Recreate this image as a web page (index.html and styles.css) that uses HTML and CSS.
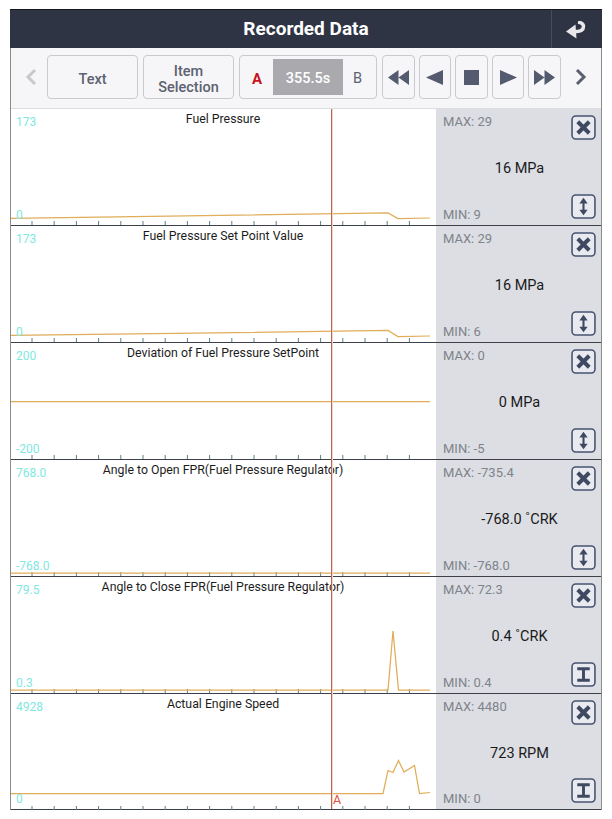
FILE: index.html
```html
<!DOCTYPE html>
<html lang="en">
<head>
<meta charset="utf-8">
<title>Recorded Data</title>
<link rel="stylesheet" href="styles.css">
</head>
<body>
<svg class="defs" width="0" height="0" aria-hidden="true">
  <symbol id="ticks" viewBox="0 0 425 116"><path class="tick" d="M21 112v4M43.200 112v4M65.400 112v4M87.600 112v4M109.800 112v4M132 112v4M154.200 112v4M176.400 112v4M198.600 112v4M220.800 112v4M243 112v4M265.200 112v4M287.400 112v4M309.600 112v4M331.800 112v4M354 112v4M376.200 112v4M398.400 112v4"/></symbol>
  <symbol id="ico-x" viewBox="0 0 24 24"><rect class="ib" x="1" y="1" width="22" height="22" rx="3.500"/><path class="ig" d="M6.500 6.500l11 11M17.500 6.500l-11 11"/></symbol>
  <symbol id="ico-ud" viewBox="0 0 24 24"><rect class="ib" x="1" y="1" width="22" height="22" rx="3.500"/><path class="ig2" d="M12 7.500v9"/><path class="if" d="M12 3.500l4 5.500H8zM12 20.500L8 15h8z"/></symbol>
  <symbol id="ico-i" viewBox="0 0 24 24"><rect class="ib" x="1" y="1" width="22" height="22" rx="3.500"/><path class="ig3" d="M6 6.500h12M6 17.500h12M12 6.500v11"/></symbol>
</svg>
<main class="frame">
  <header class="head">
    <h1 class="title">Recorded Data</h1>
    <div class="back">
      <svg class="back-ico" width="20" height="18" viewBox="0 0 20 18"><path class="back-tail" d="M8 10.800C13.500 10.800 17.500 9 17.500 5.500 17.500 3 15 1.500 12 1"/><path class="back-head" d="M0 10.500L9.500 3.500 10.500 17.500z"/></svg>
    </div>
  </header>
  <nav class="bar">
    <span class="chev"><svg width="12" height="18" viewBox="0 0 12 18"><path class="chev-off" d="M10 2L3 9l7 7"/></svg></span>
    <button class="btn wide">Text</button>
    <button class="btn wide">Item<br>Selection</button>
    <div class="btn ab">
      <span class="a">A</span>
      <span class="time">355.5s</span>
      <span class="b">B</span>
    </div>
    <div class="media">
      <button class="btn m"><svg width="21" height="15" viewBox="0 0 21 15"><path class="mi" d="M10.500 0v15L0 7.500zM21 0v15L10.500 7.500z"/></svg></button>
      <button class="btn m"><svg width="17" height="15" viewBox="0 0 17 15"><path class="mi" d="M17 0v15L0 7.500z"/></svg></button>
      <button class="btn m"><svg width="15" height="15" viewBox="0 0 15 15"><path class="mi" d="M0 0h15v15H0z"/></svg></button>
      <button class="btn m"><svg width="17" height="15" viewBox="0 0 17 15"><path class="mi" d="M0 0v15l17-7.500z"/></svg></button>
      <button class="btn m"><svg width="21" height="15" viewBox="0 0 21 15"><path class="mi" d="M0 0v15l10.500-7.500zM10.500 0v15L21 7.500z"/></svg></button>
    </div>
    <span class="chev right"><svg width="12" height="18" viewBox="0 0 12 18"><path class="chev-on" d="M2 2l7 7-7 7"/></svg></span>
  </nav>
  <section class="rows">
    <article class="row">
      <div class="chart">
        <svg class="plot" viewBox="0 0 425 116"><use href="#ticks"/><polyline class="trace" points="0,109.500 377,104 387,109.500 419,109"/></svg>
        <span class="y top">173</span><span class="y bot">0</span>
        <span class="name">Fuel Pressure</span>
      </div>
      <aside class="side">
        <span class="mm">MAX: 29</span><span class="val">16 MPa</span><span class="mm">MIN: 9</span>
        <svg class="ico x"><use href="#ico-x"/></svg><svg class="ico z"><use href="#ico-ud"/></svg>
      </aside>
    </article>
    <article class="row">
      <div class="chart">
        <svg class="plot" viewBox="0 0 425 116"><use href="#ticks"/><polyline class="trace" points="0,109.500 377,104.500 387,110.500 419,110"/></svg>
        <span class="y top">173</span><span class="y bot">0</span>
        <span class="name">Fuel Pressure Set Point Value</span>
      </div>
      <aside class="side">
        <span class="mm">MAX: 29</span><span class="val">16 MPa</span><span class="mm">MIN: 6</span>
        <svg class="ico x"><use href="#ico-x"/></svg><svg class="ico z"><use href="#ico-ud"/></svg>
      </aside>
    </article>
    <article class="row">
      <div class="chart">
        <svg class="plot" viewBox="0 0 425 116"><use href="#ticks"/><polyline class="trace" points="0,58.500 419,58.500"/></svg>
        <span class="y top">200</span><span class="y bot">-200</span>
        <span class="name">Deviation of Fuel Pressure SetPoint</span>
      </div>
      <aside class="side">
        <span class="mm">MAX: 0</span><span class="val">0 MPa</span><span class="mm">MIN: -5</span>
        <svg class="ico x"><use href="#ico-x"/></svg><svg class="ico z"><use href="#ico-ud"/></svg>
      </aside>
    </article>
    <article class="row">
      <div class="chart">
        <svg class="plot" viewBox="0 0 425 116"><use href="#ticks"/><polyline class="trace" points="0,113 419,113"/></svg>
        <span class="y top">768.0</span><span class="y bot">-768.0</span>
        <span class="name">Angle to Open FPR(Fuel Pressure Regulator)</span>
      </div>
      <aside class="side">
        <span class="mm">MAX: -735.4</span><span class="val">-768.0 ˚CRK</span><span class="mm">MIN: -768.0</span>
        <svg class="ico x"><use href="#ico-x"/></svg><svg class="ico z"><use href="#ico-ud"/></svg>
      </aside>
    </article>
    <article class="row">
      <div class="chart">
        <svg class="plot" viewBox="0 0 425 116"><use href="#ticks"/><polyline class="trace" points="0,113 377,113 382,54 387.500,113 419,113"/></svg>
        <span class="y top">79.5</span><span class="y bot">0.3</span>
        <span class="name">Angle to Close FPR(Fuel Pressure Regulator)</span>
      </div>
      <aside class="side">
        <span class="mm">MAX: 72.3</span><span class="val">0.4 ˚CRK</span><span class="mm">MIN: 0.4</span>
        <svg class="ico x"><use href="#ico-x"/></svg><svg class="ico z"><use href="#ico-i"/></svg>
      </aside>
    </article>
    <article class="row">
      <div class="chart">
        <svg class="plot" viewBox="0 0 425 116"><use href="#ticks"/><polyline class="trace" points="0,99.500 372,99.500 377,76.500 382,78.500 387.500,66.500 393,78 403.500,71.500 408.500,99.500 419,98.500"/></svg>
        <span class="y top">4928</span><span class="y bot">0</span>
        <span class="name">Actual Engine Speed</span>
      </div>
      <aside class="side">
        <span class="mm">MAX: 4480</span><span class="val">723 RPM</span><span class="mm">MIN: 0</span>
        <svg class="ico x"><use href="#ico-x"/></svg><svg class="ico z"><use href="#ico-i"/></svg>
      </aside>
    </article>
    <div class="cursor"><span class="cursor-a">A</span></div>
  </section>
</main>
</body>
</html>
```
FILE: styles.css
```css
* { box-sizing: border-box; }
html, body { margin: 0; padding: 0; background: #fff; }
body { font-family: Roboto, "Liberation Sans", sans-serif; height: 819px; overflow: hidden; }
.defs { position: absolute; }
.frame { width: 592px; margin: 9px 0 0 10px; border-left: 1px solid #8c8c8c; border-right: 1px solid #8c8c8c; }
.head { height: 39px; margin: 0 -1px; background: #2e3444; border-top: 1px solid #14171f; display: flex; align-items: center; position: relative; justify-content: center; }
.title { margin: 0; color: #fff; font-size: 19px; font-weight: 700; line-height: 38px; }
.back { position: absolute; right: 0; top: 0; bottom: 0; width: 51px; border-left: 1px solid #464c5c; display: flex; align-items: center; justify-content: center; padding-right: 3px; }
.back-ico { margin-top: 1px; }
.back-tail { fill: none; stroke: #e8e8ea; stroke-width: 3.500; }
.back-head { fill: #e8e8ea; }
.bar { height: 61px; background: #f6f6f8; border-bottom: 1px solid #dcdde0; display: flex; align-items: center; padding-bottom: 2px; }
.chev { width: 36px; flex: none; display: flex; justify-content: center; padding-left: 3px; }
.chev.right { width: 40px; padding-left: 0; }
.chev-off, .chev-on { fill: none; stroke-width: 3; }
.chev-off { stroke: #c6c8cc; }
.chev-on { stroke: #5a6070; }
.btn { height: 44px; flex: none; background: #f6f6f8; border: 1px solid #c9cacd; border-radius: 4px; padding: 0; font: 500 14.500px/16.500px Roboto, "Liberation Sans", sans-serif; color: #5c6270; display: flex; align-items: center; justify-content: center; }
.wide { width: 91px; margin-right: 5px; padding-top: 6px; }
.ab { width: 138px; font-weight: 400; }
.a { width: 33px; padding: 5px 0 0 1px; text-align: center; color: #c8141c; font-weight: 700; font-size: 15px; }
.time { width: 70px; height: 36px; padding-top: 4px; background: #a9a9ae; color: #fff; display: flex; align-items: center; justify-content: center; font-weight: 500; font-size: 14.500px; }
.b { flex: 1; padding: 5px 4px 0 0; text-align: center; font-size: 14.500px; }
.media { display: flex; flex: none; gap: 4px; margin-left: 5px; }
.m { width: 32.600px; }
.mi { fill: #555b6e; }
.rows { position: relative; }
.row { height: 117px; display: flex; border-bottom: 1px solid #3c4048; }
.row:last-of-type { height: 116px; }
.chart { width: 425px; position: relative; background: #fff; }
.plot { position: absolute; left: 0; top: 0; width: 425px; height: 116px; }
.tick { stroke: #5d7f8a; stroke-width: 1; fill: none; }
.trace { fill: none; stroke: #e0ad58; stroke-width: 1.250; }
.y { position: absolute; left: 5px; color: #7fe8df; font-size: 12px; line-height: 14px; }
.top { top: 6px; }
.bot { bottom: 3px; }
.name { position: absolute; left: 0; right: 1px; top: 3px; text-align: center; font-size: 12.300px; line-height: 15px; color: #1c1c1c; }
.side { flex: 1; background: #dcdee4; position: relative; padding: 5px 0 2px 7px; display: flex; flex-direction: column; justify-content: space-between; }
.mm { color: #7f838a; font-size: 13px; line-height: 16px; }
.val { position: absolute; left: 0; right: 0; top: 51px; padding-left: 2px; text-align: center; font-size: 14.500px; line-height: 18px; color: #1a1a1a; }
.ico { position: absolute; right: 5px; width: 25px; height: 25px; }
.x { top: 6px; }
.z { bottom: 6px; }
.ib { fill: #e8eaef; stroke: #465370; stroke-width: 1.500; }
.ig { fill: none; stroke: #3f4a62; stroke-width: 3.800; }
.ig2 { fill: none; stroke: #3f4a62; stroke-width: 2; }
.if { fill: #3f4a62; }
.ig3 { fill: none; stroke: #3f4a62; stroke-width: 2.800; }
.cursor { position: absolute; left: 320px; top: 0; bottom: 1px; width: 2px; background: linear-gradient(90deg, #b9654f 50%, #efd6cd 50%); }
.cursor-a { position: absolute; left: 2px; bottom: 3px; color: #e0503c; font-size: 12.500px; line-height: 13px; }
```
